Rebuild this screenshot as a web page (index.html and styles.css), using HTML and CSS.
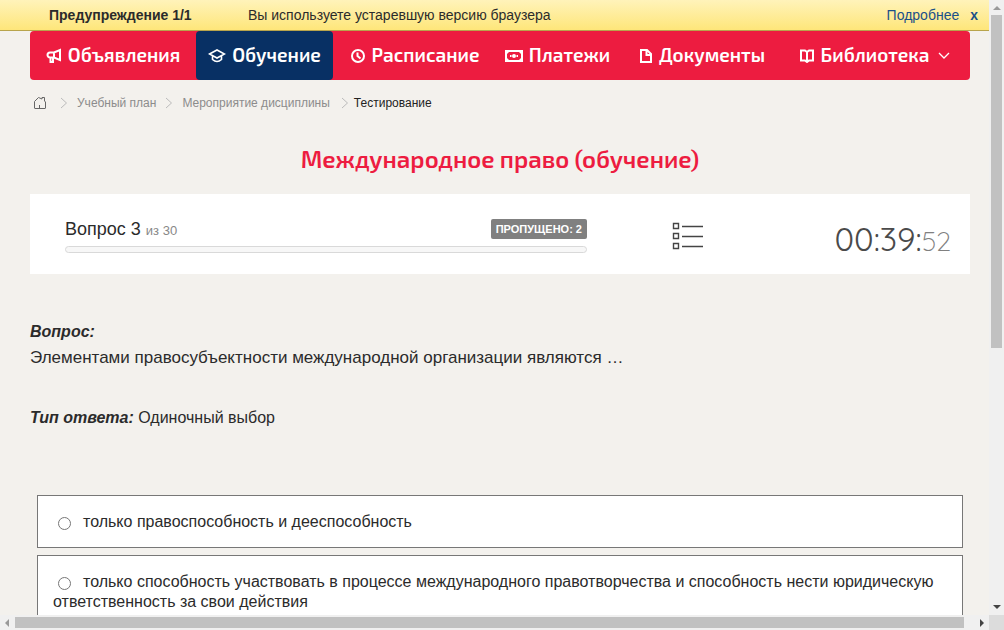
FILE: index.html
```html
<!DOCTYPE html>
<html lang="ru">
<head>
<meta charset="utf-8">
<meta name="viewport" content="width=device-width, initial-scale=1">
<title>Тестирование</title>
<link rel="stylesheet" href="styles.css">
</head>
<body>
<div class="frame">
  <div class="page">
    <div class="warning">
      <strong class="warning-title">Предупреждение 1/1</strong>
      <span class="warning-text">Вы используете устаревшую версию браузера</span>
      <a class="warning-more" href="#">Подробнее</a>
      <button class="warning-close" type="button" aria-label="Закрыть">x</button>
    </div>
    <div class="content">
      <nav class="menu">
        <a class="menu-item" href="#"><svg class="icon" width="16" height="16" viewBox="0 0 16 16"><path d="M14 3v10L8 10.500H4a2.500 2.500 0 0 1 0-5h4zM8 5.500v5M4.500 11v4H7v-4"/></svg><span>Объявления</span></a>
        <a class="menu-item active" href="#"><svg class="icon cap" width="18" height="16" viewBox="0 0 18 16"><path d="M1.500 7 9 3l7.500 4L9 11zM4.500 9v3.500q4.500 4 9 0V9"/></svg><span>Обучение</span></a>
        <a class="menu-item" href="#"><svg class="icon" width="16" height="16" viewBox="0 0 16 16"><circle cx="8" cy="9" r="6"/><path d="M7.500 5.500V9l3 2.500"/></svg><span>Расписание</span></a>
        <a class="menu-item" href="#"><svg class="icon" width="18" height="16" viewBox="0 0 18 16"><path d="M1 4h16v10H1z"/><path class="solid" d="M9 7a2 2 0 1 1 0 4 2 2 0 0 1 0-4M5 8h1.500v2H5zM11.500 8H13v2h-1.500zM1 4h4L1 8zM17 4h-4l4 4zM1 14h4l-4-4zM17 14h-4l4-4z"/></svg><span>Платежи</span></a>
        <a class="menu-item" href="#"><svg class="icon" width="14" height="16" viewBox="0 0 14 16"><path d="M2 3h6l4 4v8H2zM7.500 3v5H12"/></svg><span>Документы</span></a>
        <a class="menu-item" href="#"><svg class="icon" width="16" height="16" viewBox="0 0 16 16"><path d="M2 3.500h4L8 5l2-1.500h4v10h-4L8 15l-2-1.500H2zM8 5v10"/></svg><span>Библиотека</span><svg class="chevron" width="12" height="8" viewBox="0 0 12 8"><path d="m1 2 5 5 5-5"/></svg></a>
      </nav>
      <nav class="crumbs" aria-label="Навигация">
        <a class="home" href="#" aria-label="Главная"><svg width="14" height="14" viewBox="0 0 14 14"><path d="M1.500 5.500 5.500 1.500 9 3V1.500h2.500V5l1 1v6q0 .5-.5.500H2q-.5 0-.5-.5zM6.500 12V9"/></svg></a>
        <svg class="arrow" width="8" height="12" viewBox="0 0 8 12"><path d="m1 1 5.500 5L1 11"/></svg>
        <a href="#">Учебный план</a>
        <svg class="arrow" width="8" height="12" viewBox="0 0 8 12"><path d="m1 1 5.500 5L1 11"/></svg>
        <a href="#">Мероприятие дисциплины</a>
        <span class="current"><svg class="arrow" width="8" height="12" viewBox="0 0 8 12"><path d="m1 1 5.500 5L1 11"/></svg>Тестирование</span>
      </nav>
      <h1 class="title">Международное право (обучение)</h1>
      <section class="status">
        <div class="progress-block">
          <div class="progress-head">
            <div class="counter">Вопрос 3 <small>из 30</small></div>
            <span class="skipped">ПРОПУЩЕНО: 2</span>
          </div>
          <div class="track"></div>
        </div>
        <button class="list-button" type="button" aria-label="Список вопросов"><svg width="32" height="30" viewBox="0 0 32 30"><path d="M1.500 2.500h5v5h-5zM1.500 12.500h5v5h-5zM1.500 22.500h5v5h-5zM10 5.500h21M10 15.500h21M10 25.500h21"/></svg></button>
        <div class="timer">00:39:<small>52</small></div>
      </section>
      <main class="question">
        <h2 class="label">Вопрос:</h2>
        <p class="question-text">Элементами правосубъектности международной организации являются …</p>
        <p class="answer-type"><b class="label">Тип ответа:</b> Одиночный выбор</p>
        <div class="answers">
          <label class="answer"><input type="radio" name="answer">только правоспособность и дееспособность</label>
          <label class="answer"><input type="radio" name="answer">только способность участвовать в процессе международного правотворчества и способность нести юридическую ответственность за свои действия</label>
        </div>
      </main>
    </div>
  </div>
  <div class="bar vertical" aria-hidden="true">
    <svg width="15" height="15" viewBox="0 0 15 15"><path class="dim" d="m4 10 4-4 4 4z"/></svg>
    <div class="rail"><div class="thumb"></div></div>
    <svg width="15" height="15" viewBox="0 0 15 15"><path d="m4 5 4 4 4-4z"/></svg>
  </div>
  <div class="bar horizontal" aria-hidden="true">
    <svg width="15" height="15" viewBox="0 0 15 15"><path class="dim" d="m9 4-4 4 4 4z"/></svg>
    <div class="rail"><div class="thumb"></div></div>
    <svg width="15" height="15" viewBox="0 0 15 15"><path d="m6 4 4 4-4 4z"/></svg>
  </div>
  <div class="corner"></div>
</div>
</body>
</html>
```
FILE: styles.css
```css
* { box-sizing: border-box; }

body {
  margin: 0;
  background: #f3f1ed;
  color: #2b2b2b;
  font: 16px/20px "Liberation Sans", Arial, sans-serif;
}

a { color: inherit; text-decoration: none; }

svg { flex: none; fill: none; }

button {
  padding: 0;
  border: 0;
  background: none;
  font: inherit;
  cursor: pointer;
}

.frame {
  display: grid;
  grid-template: minmax(0, 1fr) 15px / minmax(0, 1fr) 15px;
  height: 100vh;
}

.page { overflow: hidden; }

.warning {
  display: flex;
  align-items: center;
  height: 31px;
  padding: 0 11px 0 49px;
  border-bottom: 1px solid #b8a44c;
  background: linear-gradient(#fff3ba, #fee67a);
  font-size: 14px;
}

.warning-title { width: 199px; }
.warning-text { flex: 1; }
.warning-more, .warning-close { color: #1b5088; }
.warning-close { margin-left: 11px; font-weight: bold; }

.content { padding: 0 19px 0 30px; }

.menu {
  display: grid;
  grid-template-columns: 166fr 137fr 163fr 123fr 166fr 179fr;
  height: 49px;
  padding-right: 6px;
  border-radius: 4px;
  background: #ed1c40;
  color: #fff;
  font: 600 19px/24px "Exo 2", "Noto Sans", sans-serif;
}

.menu-item {
  display: flex;
  align-items: center;
  justify-content: center;
  gap: 6px;
  padding-bottom: 2px;
  border-radius: 4px;
  white-space: nowrap;
}

.menu-item.active { background: #083064; }
.icon { stroke: #fff; stroke-width: 2; }
.icon.cap { stroke-width: 1.6; }
.icon .solid { fill: #fff; stroke: none; }
.chevron { margin-left: 3px; stroke: #fff; stroke-width: 1.3; }

.crumbs {
  display: flex;
  align-items: center;
  gap: 9px;
  height: 46px;
  padding-left: 3px;
  color: #8c8c8c;
  font-size: 12px;
}

.home { display: flex; margin-right: 4px; }
.home svg { stroke: #666; }
.arrow { stroke: #bbb; }
.current { display: flex; align-items: center; gap: 5px; margin-left: 2px; color: #222; }

.title {
  margin: 17px 0 20px;
  color: #ed1c40;
  font: 600 24px/31px "Exo 2", "Noto Sans", sans-serif;
  text-align: center;
}

.status {
  display: grid;
  grid-template-columns: 557fr 201fr 182fr;
  height: 80px;
  background: #fff;
}

.progress-block { padding: 25px 0 0 35px; }
.progress-head { display: flex; align-items: flex-start; justify-content: space-between; height: 20px; }
.counter { font-size: 18px; }
.counter small { color: #888; font-size: 13px; }

.skipped {
  padding: 0 5px;
  border-radius: 2px;
  background: #808080;
  color: #fff;
  font-size: 11px;
  font-weight: bold;
}

.track {
  height: 7px;
  margin-top: 7px;
  border: 1px solid #d9d9d9;
  border-radius: 4px;
  background: #f7f7f7;
}

.list-button { display: grid; place-items: center; padding-top: 4px; }
.list-button svg { stroke: #444; stroke-width: 1.4; }

.timer {
  padding: 25px 19px 0 0;
  color: #4a4a4a;
  font: 400 33px/40px Quicksand, Lato, sans-serif;
  text-align: right;
  white-space: nowrap;
}

.timer small { color: #808080; font-size: 27px; font-weight: 300; }

.question { padding-top: 48px; }
.label { margin: 0; font-size: 16px; font-weight: bold; font-style: italic; }
.question-text { margin: 6px 0 40px; font-size: 17px; }
.answer-type { margin: 0 0 67px; }
.answers { display: grid; gap: 7px; padding: 0 7px; }

.answer {
  display: block;
  padding: 16px 15px 15px;
  border: 1px solid #777;
  background: #fff;
}

.answer input {
  width: 13px;
  height: 13px;
  margin: 0 12px 0 5px;
  vertical-align: -3px;
}

.bar { display: flex; background: #f0f0f0; }
.bar svg { fill: #444; }
.bar .dim { fill: #999; }
.rail { flex: 1; }
.thumb { background: #c1c1c1; }
.vertical { flex-direction: column; }
.vertical .rail { padding: 0 2px; }
.vertical .thumb { height: 57%; }
.horizontal .rail { padding: 2px 0; }
.horizontal .thumb { width: 99%; height: 100%; }
.corner { background: #dcdcdc; }
```
